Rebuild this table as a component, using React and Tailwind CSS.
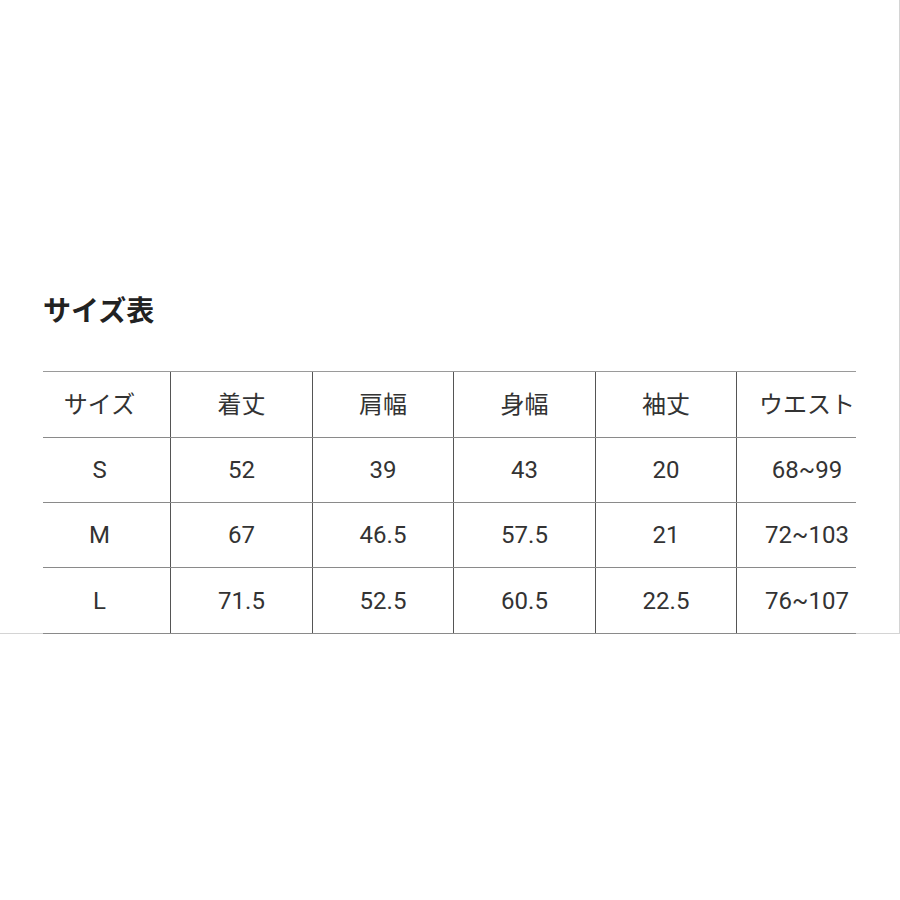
export default function App() {
  const cols = [127, 142, 141, 142, 141, 141];
  const rows = [
    { h: 65, cells: ["サイズ", "着丈", "肩幅", "身幅", "袖丈", "ウエスト"] },
    { h: 64, cells: ["S", "52", "39", "43", "20", "68~99"] },
    { h: 64, cells: ["M", "67", "46.5", "57.5", "21", "72~103"] },
    { h: 65, cells: ["L", "71.5", "52.5", "60.5", "22.5", "76~107"] },
  ];
  return (
    <div
      className="w-[900px] h-[900px] bg-white"
      style={{ fontFamily: 'Roboto, "Noto Sans CJK JP", sans-serif' }}
    >
      <div className="w-[900px] h-[634px] border-r border-b border-[#d4d4d4] pt-[296px] pl-[43px]">
        <div className="text-[28px] leading-[32px] font-bold text-[#222]">サイズ表</div>
        <div className="mt-[43px] w-[813px] overflow-hidden border-t border-[#9a9a9a]">
          <div className="w-[834px]">
            {rows.map((r, ri) => (
              <div key={ri} className="flex border-b border-[#8a8a8a]">
                {r.cells.map((c, ci) => (
                  <div
                    key={ci}
                    className={
                      "shrink-0 flex items-center justify-center text-[24px] text-[#333] " +
                      (ci > 0 ? "border-l border-[#555]" : "pr-[14px]")
                    }
                    style={{ width: cols[ci], height: r.h }}
                  >
                    {c}
                  </div>
                ))}
              </div>
            ))}
          </div>
        </div>
      </div>
    </div>
  );
}
